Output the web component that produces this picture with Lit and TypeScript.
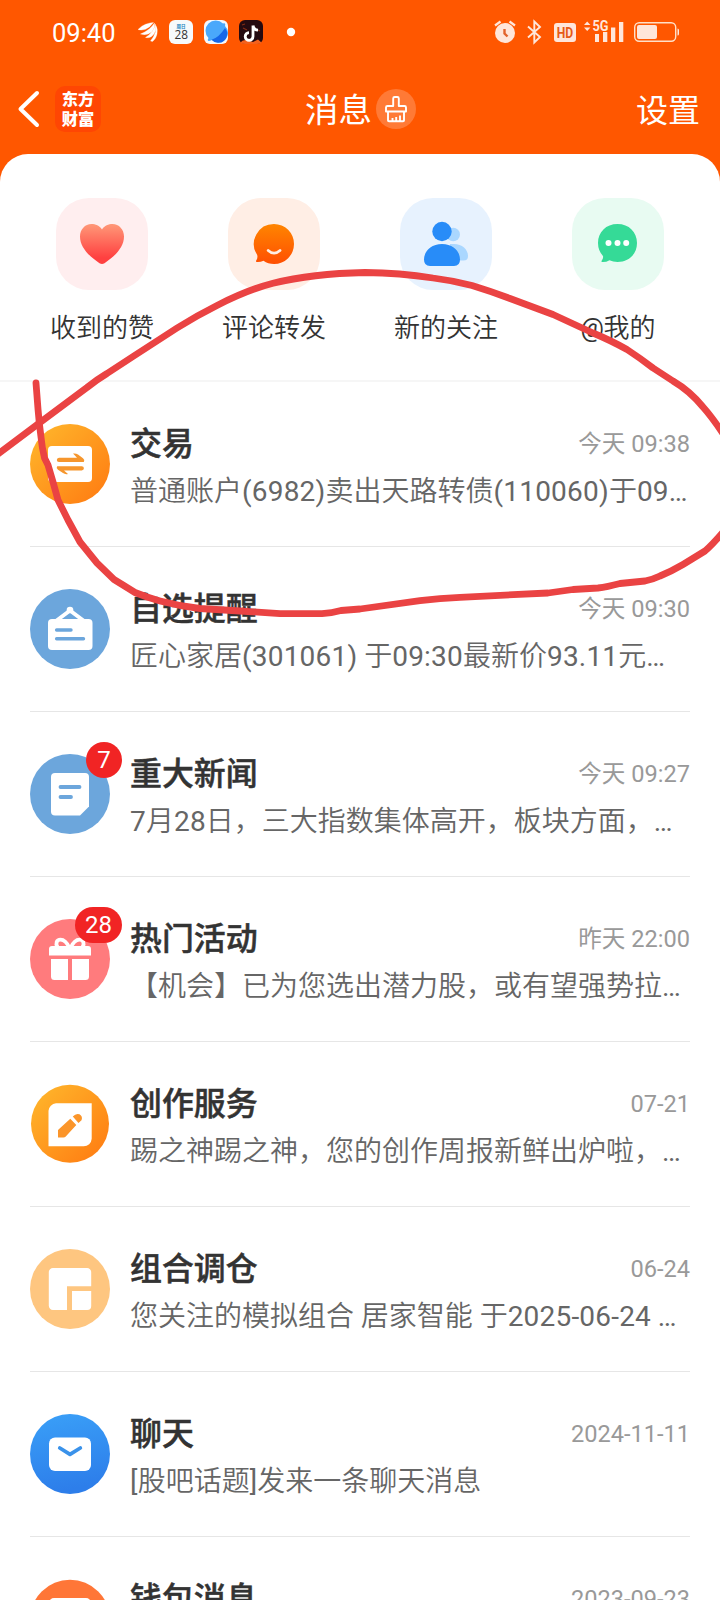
import { LitElement, html, svg, css, nothing } from "lit";
import { customElement, property } from "lit/decorators.js";

const ICONS: Record<string, unknown> = {
  trade: svg`
    <defs><linearGradient id="g" x1="0" y1="0" x2="1" y2="1"><stop offset="0.05" stop-color="#ffb62b"/><stop offset="0.95" stop-color="#ff7c12"/></linearGradient></defs>
    <circle cx="40" cy="40" r="40" fill="url(#g)"/>
    <rect x="18" y="22" width="44" height="36" rx="4" fill="#fff"/>
    <path d="M29 38q-2.200 0-2.200-2t2.200-2.200h18l-4-4.300q3-.5 5 1.100l5 3.600q2.200 1.800 .8 3.800z" fill="#f6962d"/>
    <path d="M51.700 42.200q2.200 0 2.200 2t-2.200 2.200H34l4 3.600q-3 .6-5-.9l-5-3.300q-2.200-1.700-.8-3.600z" fill="#f6962d"/>`,
  board: svg`
    <circle cx="40" cy="40" r="40" fill="#6ca6dc"/>
    <path d="M26 32L40 21.500L54 32" fill="none" stroke="#fff" stroke-width="4" stroke-linejoin="round"/>
    <circle cx="40" cy="21" r="3.300" fill="#fff"/>
    <rect x="18" y="30" width="44.500" height="31" rx="4" fill="#fff"/>
    <path d="M26.600 41H41M26.600 49.700H53.500" stroke="#6ca6dc" stroke-width="3.400" stroke-linecap="round"/>`,
  news: svg`
    <circle cx="40" cy="40" r="40" fill="#6ca6dc"/>
    <path d="M25 19H55a4 4 0 0 1 4 4V52.500L50 61.500H25a4 4 0 0 1-4-4V23a4 4 0 0 1 4-4z" fill="#fff"/>
    <path d="M30.500 33H49.500M30.500 43H41" stroke="#6ca6dc" stroke-width="3.800" stroke-linecap="round"/>`,
  gift: svg`
    <circle cx="40" cy="40" r="40" fill="#ff7b7d"/>
    <path d="M39.500 29C37 23.500 33.500 20.600 30.500 20.600C26.500 20.600 25.300 24.500 27.500 28M40.500 29C43 23.500 46.500 20.600 49.500 20.600C53.500 20.600 54.700 24.500 52.500 28" fill="none" stroke="#fff" stroke-width="3.800"/>
    <path d="M22 27H58a3 3 0 0 1 3 3V36.500H19V30a3 3 0 0 1 3-3zM21 40H38V61H24.500a3.500 3.500 0 0 1-3.500-3.500zM42 40H59V57.500a3.500 3.500 0 0 1-3.500 3.500H42z" fill="#fff"/>`,
  pen: svg`
    <defs><linearGradient id="g" x1="0" y1="0" x2="1" y2="1"><stop offset="0.05" stop-color="#ffb62b"/><stop offset="0.95" stop-color="#ff7c12"/></linearGradient></defs>
    <g transform="translate(0 .8)">
    <circle cx="40" cy="39" r="39" fill="url(#g)"/>
    <path d="M26 18.500H61.700V54a8 8 0 0 1-8 7.500H18.500V26a8 8 0 0 1 7.500-7.500z" fill="#fff"/>
    <path d="M28 45.300L40.300 34L46.300 40.300L35.500 52Q34.800 52.800 33.500 52.800H28zM42.800 31.800Q46 28 49.500 29.500Q53 31.500 51.500 35.500L48.500 38.300z" fill="#fb952a"/></g>`,
  combo: svg`
    <circle cx="40" cy="40" r="40" fill="#fec680"/>
    <path d="M23 19H57a4.200 4.200 0 0 1 4.200 4.200V37.300H37V61H23a4.200 4.200 0 0 1-4.200-4.200V23.200A4.200 4.200 0 0 1 23 19zM42 42H61.200V57a4 4 0 0 1-4 4H42z" fill="#fff"/>`,
  chat: svg`
    <defs><linearGradient id="g" x1="0" y1="0" x2="0.200" y2="1"><stop offset="0" stop-color="#3aa0f8"/><stop offset="1" stop-color="#2d7eea"/></linearGradient></defs>
    <circle cx="40" cy="40" r="40" fill="url(#g)"/>
    <rect x="19" y="23.500" width="42" height="33.500" rx="6" fill="#fff"/>
    <path d="M29.800 34L40 40.300L50.300 34" fill="none" stroke="#3a92ea" stroke-width="3.800" stroke-linecap="round" stroke-linejoin="round"/>`,
  wallet: svg`
    <circle cx="40" cy="40.700" r="40" fill="#ff7637"/>
    <rect x="19" y="19" width="42" height="40" rx="5" fill="#fff"/>`,
};

const TILES: Record<string, unknown> = {
  heart: svg`
    <defs><linearGradient id="t" x1="0" y1="0" x2="0" y2="1"><stop offset="0" stop-color="#ff9878"/><stop offset="0.850" stop-color="#ff4040"/></linearGradient></defs>
    <path d="M46 31.500C48.500 27.500 52.500 26 56.500 26C63 26 68 31.500 68 38.500C68 49.500 58.500 58.500 48.500 65.200Q46 66.800 43.500 65.200C33.500 58.500 24 49.500 24 38.500C24 31.500 29 26 35.500 26C39.500 26 43.500 27.500 46 31.500z" fill="url(#t)"/>`,
  comment: svg`
    <defs><linearGradient id="t" x1="0" y1="0" x2="0" y2="1"><stop offset="0" stop-color="#ff8500"/><stop offset="1" stop-color="#ff4f02"/></linearGradient></defs>
    <path d="M46 26A20 20 0 1 1 46 66Q40 66 35.500 62.800Q32.500 64.200 28.800 64Q27.500 63.800 28.200 62.500Q30 60 29.200 57A20 20 0 0 1 46 26z" fill="url(#t)"/>
    <path d="M40.200 52.500Q46 57.800 52 52.500" fill="none" stroke="#ffeee4" stroke-width="2.800" stroke-linecap="round"/>`,
  follow: svg`
    <circle cx="53.200" cy="36.500" r="6.800" fill="#aad7ff"/>
    <path d="M50 46H54C62 46 68 51.500 68 58Q68 62.500 63.500 62.500H50z" fill="#aad7ff"/>
    <circle cx="42" cy="33.500" r="9.700" fill="#288cf8"/>
    <path d="M42 46C53 46 60 53.500 60 61.500Q60 68 54 68H30Q24 68 24 61.500C24 53.500 31 46 42 46z" fill="#288cf8"/>`,
  mention: svg`
    <path d="M45.500 26C57 26 65 34 65 45C65 56 57 64 45.500 64Q41 64 37.500 62.200Q34 64.300 30 64Q29 63.800 29.800 62.500Q31.500 60.500 31 58Q26 52.500 26 45C26 34 34 26 45.500 26z" fill="#35da97"/>
    <circle cx="36.500" cy="45" r="3" fill="#fff"/><circle cx="45.500" cy="45" r="3" fill="#fff"/><circle cx="54.200" cy="45" r="3" fill="#fff"/>`,
};

@customElement("quick-entry")
class QuickEntry extends LitElement {
  @property() icon = "";
  @property() label = "";
  static styles = css`
    :host { display: flex; flex-direction: column; align-items: center; }
    .tile { width: 92px; height: 92px; border-radius: 33px; }
    .heart { background: #ffeeef; }
    .comment { background: #ffeee5; }
    .follow { background: #e7f2fe; }
    .mention { background: #e8fbf2; }
    svg { display: block; }
    .label { margin-top: 18px; font-size: 26px; font-weight: 350; line-height: 40px; color: #333; white-space: nowrap; }
    .at { font-weight: 400; letter-spacing: -0.500px; }
  `;
  render() {
    const parts = this.label.split(/(@)/);
    return html`<div class="tile ${this.icon}"><svg width="92" height="92" viewBox="0 0 92 92">${TILES[this.icon]}</svg></div>
      <div class="label">${parts.map((p, i) => (i % 2 ? html`<span class="at">${p}</span>` : p))}</div>`;
  }
}

@customElement("message-row")
class MessageRow extends LitElement {
  @property() icon = "";
  @property() heading = "";
  @property() time = "";
  @property() preview = "";
  @property() badge = "";
  static styles = css`
    :host { display: block; padding: 0 30px; }
    .row { display: flex; height: 164px; border-bottom: 1px solid #e6e6e6; }
    .avatar { position: relative; width: 80px; height: 80px; margin: 42px 20px 0 0; flex: none; }
    svg { display: block; }
    .badge { position: absolute; right: -12px; top: -12px; height: 36px; min-width: 36px; padding: 0 10px; box-sizing: border-box;
      border-radius: 18px; background: #f12424; color: #fff; font-size: 24px; line-height: 36px; text-align: center; }
    .body { flex: 1; min-width: 0; padding-top: 43px; }
    .top { display: flex; justify-content: space-between; align-items: center; height: 38px; }
    .heading { font-size: 31.900px; font-weight: 500; color: #333; line-height: 38px; -webkit-text-stroke: 0.500px #333; }
    .time { font-size: 23.600px; color: #999; line-height: 36px; }
    .preview { margin-top: 9px; font-size: 28px; font-weight: 350; line-height: 40px; height: 40px; color: #666; white-space: pre; }
    .latin { letter-spacing: 0.200px; font-weight: 400; }
  `;
  render() {
    const parts = this.preview.split(/([\d():.\-\[\]…]+)/);
    return html`<div class="row">
      <div class="avatar"><svg width="80" height="80" viewBox="0 0 80 80">${ICONS[this.icon]}</svg>
        ${this.badge ? html`<span class="badge">${this.badge}</span>` : nothing}</div>
      <div class="body">
        <div class="top"><span class="heading">${this.heading}</span><span class="time">${this.time}</span></div>
        <div class="preview">${parts.map((p, i) => (i % 2 ? html`<span class="latin">${p}</span>` : p))}</div>
      </div></div>`;
  }
}

const ROWS = [
  ["trade", "交易", "今天 09:38", "普通账户(6982)卖出天路转债(110060)于09…", ""],
  ["board", "自选提醒", "今天 09:30", "匠心家居(301061) 于09:30最新价93.11元…", ""],
  ["news", "重大新闻", "今天 09:27", "7月28日，三大指数集体高开，板块方面，…", "7"],
  ["gift", "热门活动", "昨天 22:00", "【机会】已为您选出潜力股，或有望强势拉…", "28"],
  ["pen", "创作服务", "07-21", "踢之神踢之神，您的创作周报新鲜出炉啦，…", ""],
  ["combo", "组合调仓", "06-24", "您关注的模拟组合 居家智能 于2025-06-24 …", ""],
  ["chat", "聊天", "2024-11-11", "[股吧话题]发来一条聊天消息", ""],
  ["wallet", "钱包消息", "2023-09-23", "", ""],
];

@customElement("app-root")
class AppRoot extends LitElement {
  static styles = css`
    :host { display: block; position: relative; width: 720px; height: 1600px; overflow: hidden; background: #ff5700;
      font-family: Roboto, "Noto Sans CJK SC", sans-serif; }
    svg { display: block; }
    .status { display: flex; align-items: center; height: 64px; padding: 0 38px 0 52px; color: #fff; }
    .clock { width: 86px; font-size: 25.500px; line-height: 64px; padding-top: 1px; }
    .spacer { flex: 1; }
    .nav { display: grid; grid-template-columns: 1fr auto 1fr; align-items: center; height: 90px; padding: 0 20px 0 17px; color: #fff; }
    .left { display: flex; align-items: center; gap: 15px; }
    .logo { width: 46px; height: 46px; border-radius: 10px; background: #ff4603; box-sizing: border-box; padding-top: 3px;
      font: 800 16.300px/19.500px "Noto Sans CJK SC", sans-serif; text-align: center; }
    .title { display: flex; align-items: center; gap: 4px; font-size: 33.500px; line-height: 44px; padding-left: 4px; }
    .title span, .settings { padding-top: 3px; }
    .settings { justify-self: end; font-size: 32px; line-height: 44px; }
    .panel { background: #fff; border-radius: 28px 28px 0 0; }
    .entries { display: grid; grid-template-columns: repeat(4, 1fr); padding: 44px 16px 0; height: 182px; border-bottom: 2px solid #f6f6f6; }
    .stroke { position: absolute; left: 0; top: 0; pointer-events: none; }
  `;

  private appIcons() {
    return html`<svg width="160" height="28" viewBox="0 0 160 28" aria-hidden="true">
      <path fill="#fff" stroke="#fff" stroke-width=".3" d="M0 11.500Q3 8 7.500 6.300Q12.500 4.500 15.500 4.500Q12 9.500 7.500 11.300Q3 12.800 0 11.500z
        M2.500 16Q7.500 14 11.500 10.800Q14.500 8 16.500 5Q17 10 13.500 14Q9 18 2.500 16z
        M7.500 19.500Q11.500 17 14.500 13Q16.800 9.500 17.200 6Q18.800 10.500 16.300 15.500Q13 20.800 7.500 19.500z
        M12.500 23Q16 18.500 17.300 14.500Q18.300 11 17.800 7.500Q20 10.500 19 16Q18 21 14.500 23.500z"/>
      <rect x="31" y="2" width="24" height="24" rx="6" fill="#f7fafb"/>
      <text x="43" y="10.300" font-size="4.500" font-weight="700" font-family="Noto Sans CJK SC" fill="#1583bd" text-anchor="middle">周日</text>
      <text x="43.200" y="21.300" font-size="11.800" font-family="Open Sans" fill="#333" text-anchor="middle">28</text>
      <rect x="66" y="2" width="24" height="24" rx="6" fill="#f5f8fc"/>
      <path d="M85 5.500Q88 4.500 87 8A8.800 8.800 0 0 1 74 22Q68 24.500 70.500 20A8.800 8.800 0 0 1 85 5.500z" fill="#4aa8fb"/>
      <path d="M87 10A8.800 8.800 0 0 1 73.500 21.800Q81 19.500 87 10z" fill="#1667e8"/>
      <rect x="101" y="2" width="24" height="24" rx="6" fill="#250a10"/>
      <path d="M102 25Q105 21 110 22.500L115 24L120 21.500L124 25Q122 26 119 26H107Q103.500 26 102 25z" fill="#f5611c"/>
      <path d="M104 7l3-1m-2 4l4 2m11 0l2 1" stroke="#842d17" stroke-width="1.200"/>
      <path d="M115 7.500V18.500A3.900 3.900 0 1 1 111 14.600M115 7.500Q115.800 12 120 12.200" fill="none" stroke="#fff" stroke-width="2.800"/>
      <circle cx="153" cy="14" r="4.200" fill="#fff"/>
    </svg>`;
  }

  private systemIcons() {
    return html`<svg width="188" height="28" viewBox="0 0 188 28" fill="#ffe6da" aria-hidden="true">
      <circle cx="11" cy="15" r="10"/>
      <path d="M1 7.500L6.500 3.500M21 7.500L15.500 3.500" stroke="#ffe6da" stroke-width="2.200"/>
      <path d="M10.500 11V15.500L13.500 18.500" fill="none" stroke="#e2622b" stroke-width="2.400"/>
      <path d="M34 8.500L46 19L40.300 24.500V3.500L46 9L34 19.500" fill="none" stroke="#ffe6da" stroke-width="1.900"/>
      <rect x="60" y="5" width="22" height="19" rx="3"/>
      <text x="71" y="20" font-size="15.500" font-weight="700" font-family="Roboto" fill="#e65a16" text-anchor="middle" textLength="16.500" lengthAdjust="spacingAndGlyphs">HD</text>
      <path d="M90 7L93.200 3.500L96.400 7zM90 9.500L93.200 13L96.400 9.500z"/>
      <text x="98.500" y="13" font-size="14" font-weight="700" font-family="Roboto" textLength="16" lengthAdjust="spacingAndGlyphs">5G</text>
      <path d="M101 16h4v8h-4zM109 14h4.300V24h-4.300zM117 9.500h4.300v14.500h-4.300zM125 4h4.300v20h-4.300z"/>
      <rect x="140.700" y="4.700" width="41" height="18.600" rx="4.500" fill="none" stroke="#ffe0c8" stroke-width="1.400"/>
      <rect x="143" y="7" width="20" height="14" rx="2"/>
      <path d="M183.500 10.500Q185 10.500 185 12V16Q185 17.500 183.500 17.500z"/>
    </svg>`;
  }

  render() {
    return html`
      <div class="status"><span class="clock">09:40</span>${this.appIcons()}<span class="spacer"></span>${this.systemIcons()}</div>
      <div class="nav">
        <div class="left">
          <svg width="23" height="38" viewBox="0 0 23 38"><path d="M20 3L3.500 19L20 35" fill="none" stroke="#fff" stroke-width="4" stroke-linecap="round" stroke-linejoin="round"/></svg>
          <div class="logo">东方<br />财富</div>
        </div>
        <div class="title"><span>消息</span>
          <svg width="40" height="40" viewBox="0 0 40 40"><circle cx="20" cy="20" r="20" fill="#ff7a36"/>
            <path d="M17.200 17V9.500Q17.200 8 18.700 8H21.300Q22.800 8 22.800 9.500V17H28.500Q30 17 30 18.500V22.500H10V18.500Q10 17 11.500 17zM12 22.500V31.500Q12 32.300 13 32.300H27Q28 32.300 28 31.500V22.500M16.500 32V29M20.200 32V28M24 32V26.500" fill="none" stroke="#fff" stroke-width="1.900" stroke-linejoin="round"/></svg>
        </div>
        <div class="settings">设置</div>
      </div>
      <div class="panel">
        <div class="entries">
          <quick-entry icon="heart" label="收到的赞"></quick-entry>
          <quick-entry icon="comment" label="评论转发"></quick-entry>
          <quick-entry icon="follow" label="新的关注"></quick-entry>
          <quick-entry icon="mention" label="@我的"></quick-entry>
        </div>
        ${ROWS.map(([icon, heading, time, preview, badge]) => html`<message-row
          icon=${icon} heading=${heading} time=${time} preview=${preview} badge=${badge}></message-row>`)}
      </div>
      <svg class="stroke" width="720" height="640" viewBox="0 0 720 640" fill="none" stroke="#ea4343" stroke-width="6.800" stroke-linecap="round" stroke-linejoin="round">
        <path d="M36 383L38 409Q39 422 41 437Q42 448 44.500 458L48 465L53 482L58 500L68 520L80 542L97 563L114 579.500Q123 585 135 592.500Q146 597 160 601Q179 606 200 608.500L240 611L280 613.700H322Q332 613 341 610.500L360 609L420 600.700Q440 598 460 597.300L548 593L573 589.500L598 588Q607 587 620 583.500L645 581Q654 579 660 576Q672 571 683 564.500L705 551Q712 545 724 531"/>
        <path d="M-6 457L40 422.500L87 387.500Q97 379.500 107 373.500L133 356.500L177 328Q197 315.500 217 305.500Q247 290 273 283.300Q312 273.500 365 272.500Q400 272.700 433 278Q453 280.500 472 285.500Q490 291 510 298.500L553 314.500L593 333Q612 341 627 349.500Q640 358 653 368L673 381Q690 391 703 407Q712 417 724 435"/>
      </svg>`;
  }
}
